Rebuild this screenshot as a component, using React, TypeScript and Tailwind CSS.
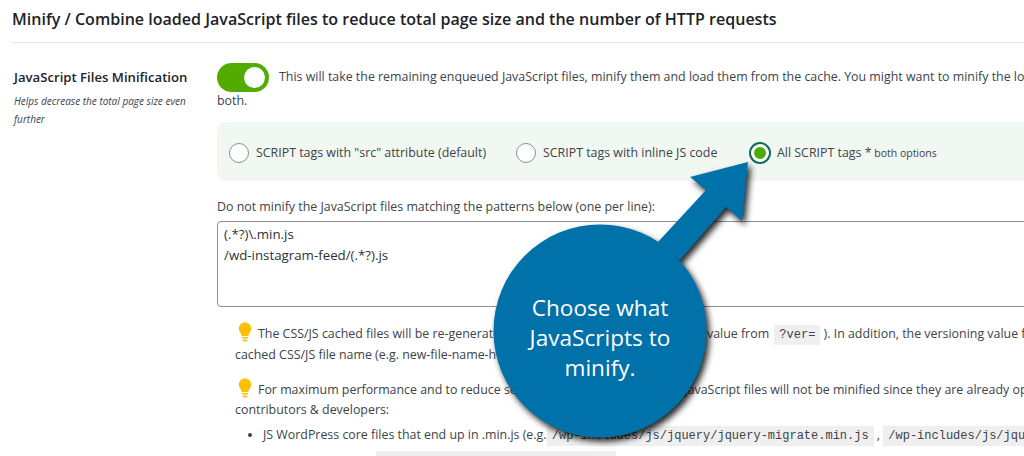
const sans = "font-['Open_Sans','Noto_Sans',sans-serif]";

function Bulb() {
  return (
    <svg width="14" height="20" viewBox="0 0 14 20" className="inline-block align-[-4px]">
      <path
        d="M7 0.5C3.3 0.5 0.8 3.2 0.8 6.400c0 2.900 1.900 4.200 2.600 6.200.2.500.3 1 .4 1.400h6.400c.1-.4.2-.9.4-1.400.7-2 2.600-3.300 2.600-6.200C13.200 3.200 10.700.5 7 .5z"
        fill="#ffbf00"
      />
      <rect x="3.800" y="15" width="6.400" height="1.600" rx="0.600" fill="#ffbf00" />
      <rect x="4.500" y="17.500" width="5" height="1.800" rx="0.900" fill="#ffbf00" />
    </svg>
  );
}

function Code({ children, className = "" }: { children: string; className?: string }) {
  return (
    <code className={`bg-[#efefef] px-[5px] py-[3px] font-['Liberation_Mono',monospace] text-[12px] text-[#3c434a] ${className}`}>
      {children}
    </code>
  );
}

function Radio({ label, checked, note }: { label: string; checked?: boolean; note?: string }) {
  return (
    <label className="flex items-center">
      {checked ? (
        <span className="flex h-[22px] w-[22px] items-center justify-center rounded-full border-2 border-[#0f6a5c] bg-white">
          <span className="h-[12px] w-[12px] rounded-full bg-[#4cab00]" />
        </span>
      ) : (
        <span className="h-[20px] w-[20px] rounded-full border border-[#8c8f94] bg-white" />
      )}
      <span className={checked ? "ml-[6px]" : "ml-[7px]"}>
        {label}
        {note ? <span className="text-[10.500px]"> {note}</span> : null}
      </span>
    </label>
  );
}

export default function App() {
  return (
    <div className={`relative h-[456px] w-[1024px] overflow-hidden bg-white text-[12.400px] text-[#3c434a] ${sans}`}>
      <div className="w-[1400px] pl-3">
        <h2 className="h-[43px] border-b border-[#e5e7e8] pt-[8px] text-[16.060px] leading-[22px] font-semibold whitespace-nowrap text-[#1d2327]">
          Minify / Combine loaded JavaScript files to reduce total page size and the number of HTTP requests
        </h2>
        <div className="flex pt-[20px]">
          <div className="w-[205px] shrink-0 pl-[2px]">
            <div className="pt-[4px] text-[13.150px] leading-[20px] font-semibold text-[#1d2327]">JavaScript Files Minification</div>
            <p className="mt-[5px] w-[180px] text-[10px] leading-[18px] italic">
              Helps decrease the total page size even further
            </p>
          </div>
          <div className="min-w-0 flex-1">
            <div className="flex h-[29px] whitespace-nowrap">
              <span className="mr-[10px] flex h-[29px] w-[52px] shrink-0 items-center justify-end rounded-full bg-[#52ac00] pr-[4px]">
                <span className="h-[21px] w-[21px] rounded-full bg-white" />
              </span>
              <span className="pt-px leading-[25px]">
                This will take the remaining enqueued JavaScript files, minify them and load them from the cache. You might want to minify the local files, the inline JS code or
              </span>
            </div>
            <div className="-mt-px leading-[20px]">both.</div>
            <div className="mt-[11px] flex h-[59px] items-center rounded-lg bg-[#f1f8f1] pt-[3px] pl-[12px]">
              <div className="w-[287px]"><Radio label={'SCRIPT tags with "src" attribute (default)'} /></div>
              <div className="w-[233px]"><Radio label="SCRIPT tags with inline JS code" /></div>
              <Radio label="All SCRIPT tags *" note="both options" checked />
            </div>
            <p className="mt-[16px] leading-[20px]">Do not minify the JavaScript files matching the patterns below (one per line):</p>
            <div className="mt-[4px] h-[86px] rounded border border-[#8c8f94] px-[6px] pt-[2px] text-[13.300px] leading-[21px] text-[#2c3338]">
              <div>(.*?)\.min.js</div>
              <div>/wd-instagram-feed/(.*?).js</div>
            </div>
            <div className="pt-[15px] pl-[18px] leading-[20px] whitespace-nowrap">
              <p>
                <span className="mr-[6px] ml-[3px]"><Bulb /></span>
                The CSS/JS cached files will be re-generated once the file version changes (the value from <Code className="ml-[2px]">?ver=</Code> ). In addition, the versioning value from the source is included in the
                <br />
                cached CSS/JS file name (e.g. new-file-name-here-ver-1.2.min.js).
              </p>
              <p className="mt-[13px]">
                <span className="mr-[6px] ml-[3px]"><Bulb /></span>
                For maximum performance and to reduce server resources, the following JavaScript files will not be minified since they are already optimized by WordPress
                <br />
                contributors &amp; developers:
              </p>
              <ul className="mt-[5px] list-disc pl-[28px]">
                <li>
                  JS WordPress core files that end up in .min.js (e.g. <Code className="-ml-[3px]">/wp-includes/js/jquery/jquery-migrate.min.js</Code> , <Code>/wp-includes/js/jquery/jquery.min.js</Code>)
                  <div className="mt-[6px] pl-[113px]"><Code className="pt-[5px]">/wp-includes/js/jquery/jquery.js</Code></div>
                </li>
              </ul>
            </div>
          </div>
        </div>
      </div>

      {/* callout: arrow plus circle */}
      <svg
        width="1024"
        height="456"
        viewBox="0 0 1024 456"
        className="pointer-events-none absolute top-0 left-0 drop-shadow-[3px_4px_3px_rgba(0,0,0,0.85)]"
      >
        <path d="M748 162 L690 177 L706 190 L658 242 L680 260 L726 207 L742 221 Z" fill="#0071a9" />
        <circle cx="600" cy="331" r="106.500" fill="#0071a9" />
      </svg>
      <div className="absolute top-[293px] left-[500px] w-[200px] text-center text-[22.600px] leading-[30px] text-white">
        Choose what
        <br />
        JavaScripts to
        <br />
        minify.
      </div>
    </div>
  );
}
